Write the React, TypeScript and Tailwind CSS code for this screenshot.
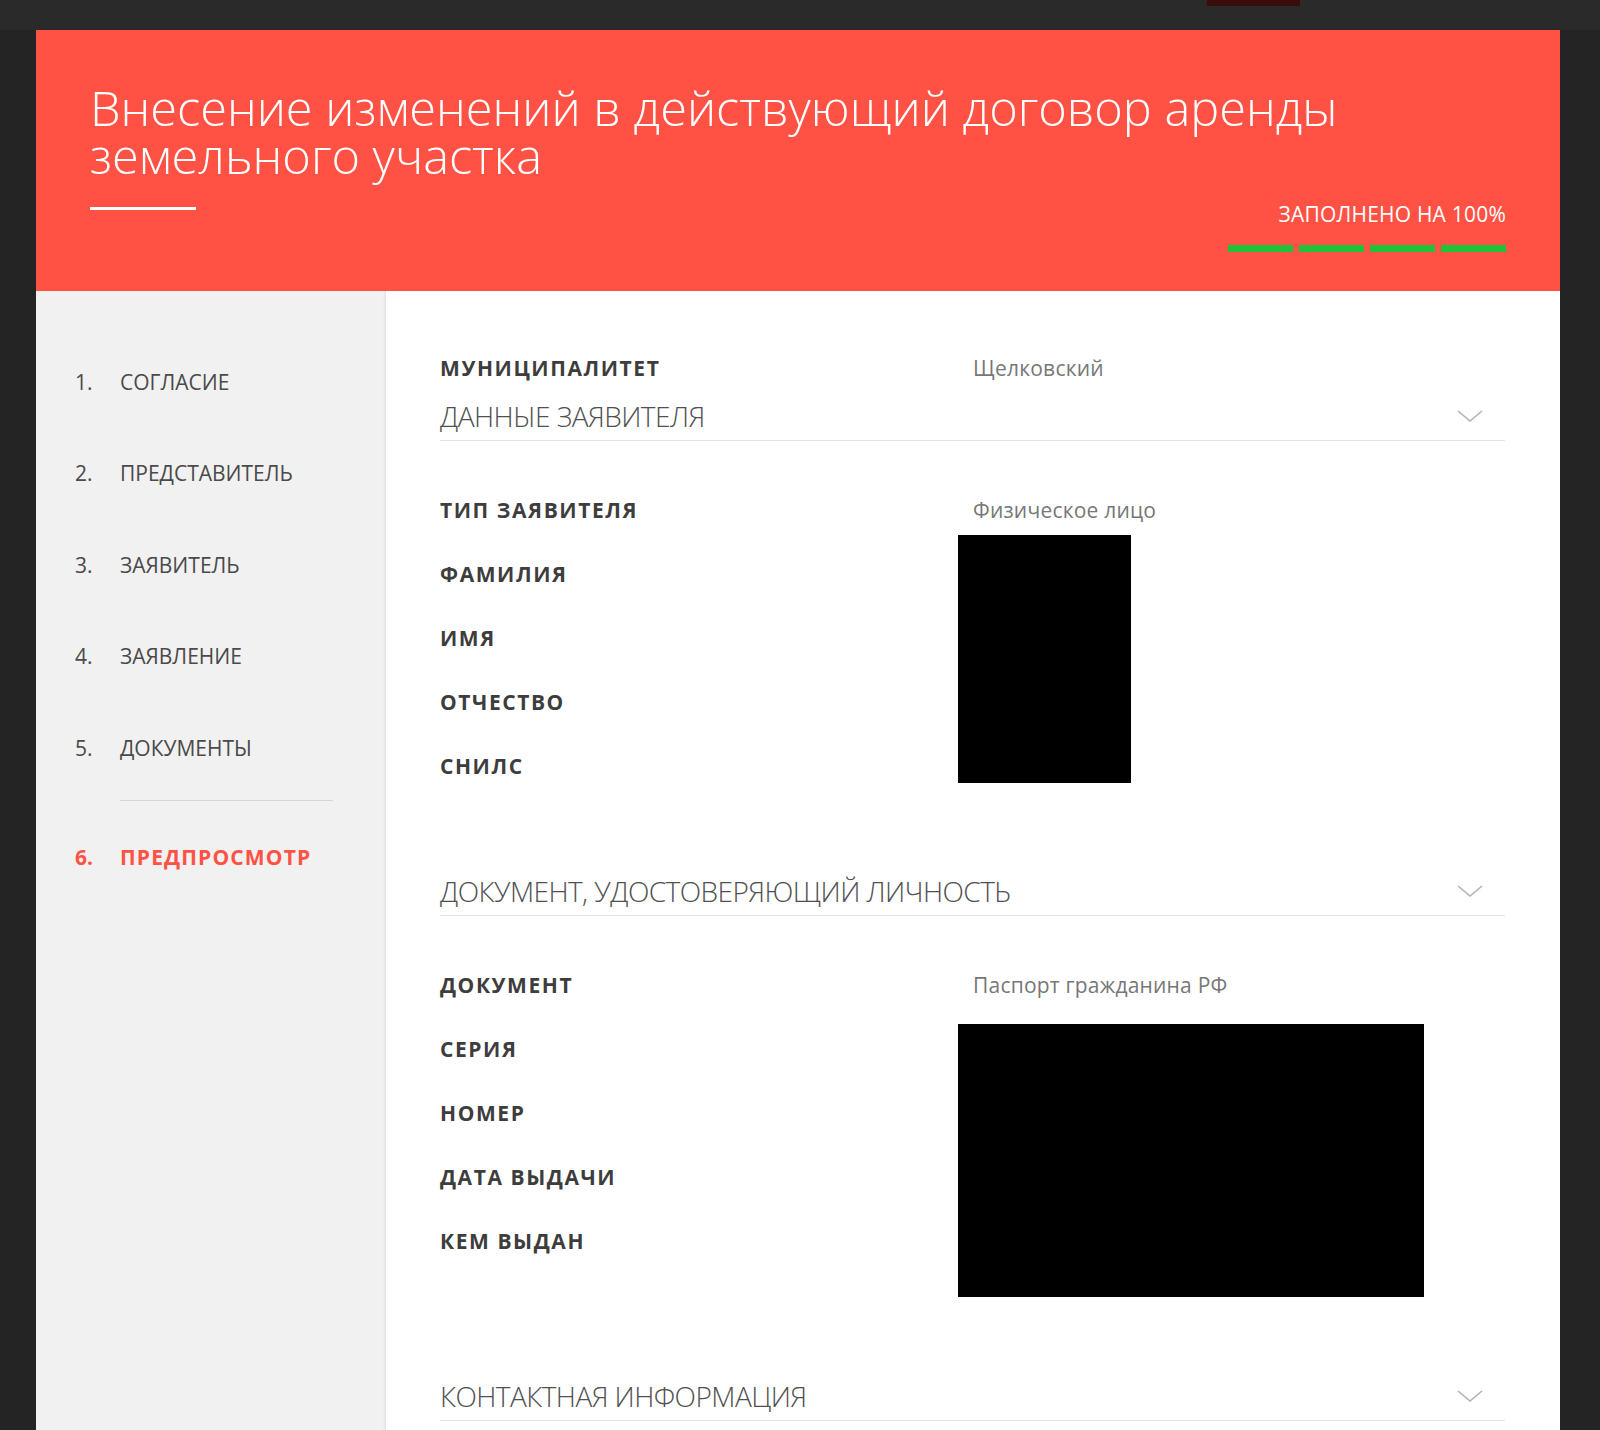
const steps = [
  { n: "1.", label: "СОГЛАСИЕ" },
  { n: "2.", label: "ПРЕДСТАВИТЕЛЬ" },
  { n: "3.", label: "ЗАЯВИТЕЛЬ" },
  { n: "4.", label: "ЗАЯВЛЕНИЕ" },
  { n: "5.", label: "ДОКУМЕНТЫ" },
];

function Chevron() {
  return (
    <svg width="26" height="12" viewBox="0 0 26 12" fill="none" className="mr-[22px]">
      <path d="M1 1 L13 11 L25 1" stroke="#b3b3b3" strokeWidth="1.6" />
    </svg>
  );
}

function SectionHeader({ title }: { title: string }) {
  return (
    <div className="flex items-center justify-between border-b border-[#e3e3e3] pb-[6px]">
      <h3 className="text-[28px] font-light leading-[36px] tracking-[-0.02em] text-[#505050]">{title}</h3>
      <Chevron />
    </div>
  );
}

function Row({ label, value }: { label: string; value?: string }) {
  return (
    <div className="flex h-[28px] items-center">
      <div className="w-[533px] text-[21px] font-bold leading-[28px] tracking-[0.075em] text-[#3d3d3d]">{label}</div>
      {value && <div className="text-[21px] leading-[28px] tracking-[0.01em] text-[#777]">{value}</div>}
    </div>
  );
}

export default function App() {
  return (
    <div className="h-[1430px] overflow-hidden bg-[#242424] font-['Open_Sans',sans-serif]">
      <div className="flex h-[30px] bg-[#2a2a2a]">
        <div className="ml-[1207px] h-[6px] w-[93px] bg-[#3a0c0c]" />
      </div>
      <div className="ml-[36px] w-[1524px]">
        <header className="flex h-[261px] justify-between bg-[#ff5245] px-[54px]">
          <div className="min-w-0 flex-1 pt-[53px]">
            <h1 className="whitespace-nowrap text-[48.7px] font-light leading-[48px] text-white">
              <span className="block">Внесение изменений в действующий договор аренды</span>
              <span className="block">земельного участка</span>
            </h1>
            <div className="mt-[28px] h-[3px] w-[106px] bg-white" />
          </div>
          <div className="flex shrink-0 flex-col items-end self-end pb-[39px]">
            <div className="text-[21px] leading-[28px] tracking-[0.01em] text-white">ЗАПОЛНЕНО НА 100%</div>
            <div className="mt-[17px] flex gap-[6px]">
              <div className="h-[7px] w-[65px] bg-[#1ec337]" />
              <div className="h-[7px] w-[65px] bg-[#1ec337]" />
              <div className="h-[7px] w-[65px] bg-[#1ec337]" />
              <div className="h-[7px] w-[65px] bg-[#1ec337]" />
            </div>
          </div>
        </header>

        <div className="flex">
          <nav className="h-[1139px] w-[350px] shrink-0 bg-[#f1f1f1] pt-[77px] shadow-[inset_-3px_0_3px_-2px_rgba(0,0,0,0.08)]">
            <ul className="flex flex-col gap-[63.4px]">
              {steps.map((s) => (
                <li key={s.n} className="flex text-[21px] leading-[28px] text-[#4a4a4a]">
                  <span className="w-[84px] pl-[39px]">{s.n}</span>
                  <span>{s.label}</span>
                </li>
              ))}
            </ul>
            <div className="ml-[84px] mt-[38px] h-px w-[213px] bg-[#d6d6d6]" />
            <div className="mt-[42px] flex text-[21px] font-bold leading-[28px] text-[#ff5245]">
              <span className="w-[84px] pl-[39px]">6.</span>
              <span className="tracking-[0.055em]">ПРЕДПРОСМОТР</span>
            </div>
          </nav>

          <main className="flex-1 bg-white pl-[54px] pr-[55px] pt-[63px]">
            <Row label="МУНИЦИПАЛИТЕТ" value="Щелковский" />

            <section className="mt-[16px]">
              <SectionHeader title="ДАННЫЕ ЗАЯВИТЕЛЯ" />
              <div className="relative mt-[55px] flex flex-col gap-[36px]">
                <Row label="ТИП ЗАЯВИТЕЛЯ" value="Физическое лицо" />
                <Row label="ФАМИЛИЯ" />
                <Row label="ИМЯ" />
                <Row label="ОТЧЕСТВО" />
                <Row label="СНИЛС" />
                <div className="absolute left-[518px] top-[39px] h-[248px] w-[173px] bg-black" />
              </div>
            </section>

            <section className="mt-[93px]">
              <SectionHeader title="ДОКУМЕНТ, УДОСТОВЕРЯЮЩИЙ ЛИЧНОСТЬ" />
              <div className="relative mt-[55px] flex flex-col gap-[36px]">
                <Row label="ДОКУМЕНТ" value="Паспорт гражданина РФ" />
                <Row label="СЕРИЯ" />
                <Row label="НОМЕР" />
                <Row label="ДАТА ВЫДАЧИ" />
                <Row label="КЕМ ВЫДАН" />
                <div className="absolute left-[518px] top-[53px] h-[273px] w-[466px] bg-black" />
              </div>
            </section>

            <section className="mt-[123px]">
              <SectionHeader title="КОНТАКТНАЯ ИНФОРМАЦИЯ" />
            </section>
          </main>
        </div>
      </div>
    </div>
  );
}
